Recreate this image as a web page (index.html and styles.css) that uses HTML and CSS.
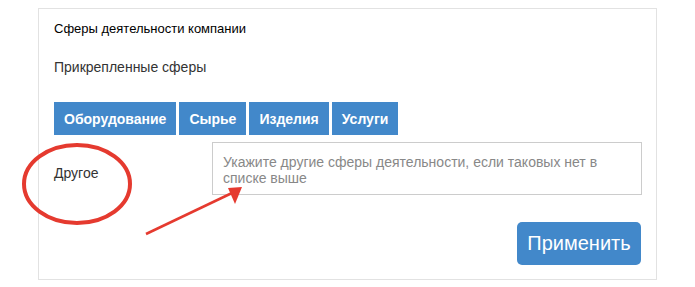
FILE: index.html
```html
<!DOCTYPE html>
<html lang="ru">
<head>
    <meta charset="UTF-8">
    <title>Сферы деятельности компании</title>
    <link rel="stylesheet" href="styles.css">
</head>
<body>

    <div class="panel">
        <div class="panel-title">Сферы деятельности компании</div>

        <div class="section-label">Прикрепленные сферы</div>

        <div class="sphere-list">
            <button class="sphere-button">Оборудование</button>
            <button class="sphere-button">Сырье</button>
            <button class="sphere-button">Изделия</button>
            <button class="sphere-button">Услуги</button>
        </div>

        <div class="form-row">
            <label class="form-label" for="other">Другое</label>
            <textarea id="other" class="form-input" placeholder="Укажите другие сферы деятельности, если таковых нет в списке выше"></textarea>
        </div>

        <div class="form-actions">
            <button class="apply-button">Применить</button>
        </div>
    </div>

    <!-- annotation drawn over the screenshot -->
    <svg class="annotation" width="695" height="287" viewBox="0 0 695 287">
        <ellipse cx="77" cy="184" rx="53" ry="39" fill="none" stroke="#e53a2f" stroke-width="4"/>
        <line x1="146" y1="234" x2="232" y2="193" stroke="#e53a2f" stroke-width="2.5"/>
        <polygon points="242,187 228,188 235,204" fill="#e53a2f"/>
    </svg>

</body>
</html>
```

FILE: styles.css
```css
body {
    font-family: "Liberation Sans", Arial, sans-serif;
    background-color: #fff;
    margin: 0;
    padding: 0;
    position: relative;
}

.panel {
    margin: 8px 0 0 38px;
    width: 588px;
    height: 244px;
    border: 1px solid #e2e2e2;
    padding: 12px 14px 14px 15px;
    color: #333;
}

.panel-title {
    font-size: 13px;
    line-height: 15px;
    color: #000;
}

.section-label {
    margin-top: 23px;
    font-size: 14px;
    line-height: 16px;
}

.sphere-list {
    display: flex;
    gap: 3px;
    margin-top: 27px;
}

    .sphere-button {
        height: 33px;
        padding: 0 10px;
        border: none;
        background: #4288ca;
        color: #fff;
        font-family: inherit;
        font-size: 14px;
        font-weight: bold;
    }

.form-row {
    display: flex;
    margin-top: 7px;
}

    .form-label {
        width: 158px;
        padding-top: 23px;
        font-size: 14px;
        line-height: 16px;
    }

    .form-input {
        width: 430px;
        height: 53px;
        box-sizing: border-box;
        margin: 0;
        padding: 11px 10px 0;
        border: 1px solid #ccc;
        resize: none;
        font-family: inherit;
        font-size: 14px;
        line-height: 16px;
    }

        .form-input::placeholder {
            color: #888;
        }

.form-actions {
    display: flex;
    justify-content: flex-end;
    margin-top: 27px;
    padding-right: 1px;
}

.apply-button {
    width: 124px;
    height: 43px;
    border: none;
    border-radius: 5px;
    background: #4288ca;
    color: #fff;
    font-family: inherit;
    font-size: 20px;
}

.annotation {
    position: absolute;
    left: 0;
    top: 0;
    pointer-events: none;
}
```
